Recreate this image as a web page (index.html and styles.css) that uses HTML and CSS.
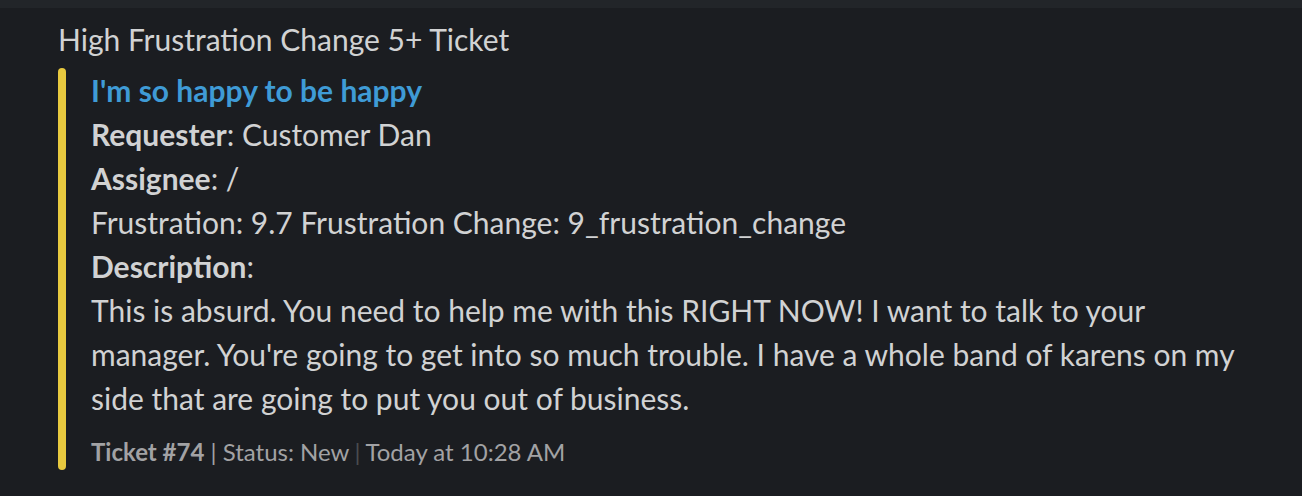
FILE: index.html
```html
<!DOCTYPE html>
<html lang="en">

<head>
    <meta charset="UTF-8">
    <title>High Frustration Change 5+ Ticket</title>
    <meta name="viewport" content="width=device-width, initial-scale=1.0">
    <link rel="stylesheet" href="styles.css">
</head>

<body>
    <div class="top-band"></div>

    <div class="message">
        <div class="message-text">High Frustration Change 5+ Ticket</div>

        <div class="attachment">
            <div class="attachment-bar"></div>
            <div class="attachment-body">
                <a class="attachment-title" href="#">I'm so happy to be happy</a>
                <div class="field"><b>Requester</b>: Customer Dan</div>
                <div class="field"><b>Assignee</b>: /</div>
                <div class="field">Frustration: 9.7 Frustration Change: 9_frustration_change</div>
                <div class="field"><b>Description</b>:</div>
                <div class="field">This is absurd. You need to help me with this RIGHT NOW! I want to talk to your manager. You're going to get into so much trouble. I have a whole band of karens on my side that are going to put you out of business.</div>
                <div class="attachment-footer">
                    <b>Ticket #74</b> | Status: New<span class="sep">|</span>Today at 10:28 AM
                </div>
            </div>
        </div>
    </div>
</body>
</html>
```

FILE: styles.css
```css
/* Fondo oscuro de toda la ventana */
body, html {
height: 100%;
margin: 0;
padding: 0;
background-color: #1b1d21;
font-family: Lato, "Noto Sans", sans-serif;
color: #d1d2d3;
}

/* Franja superior */
.top-band {
height: 8px;
background-color: #222529;
}

.message {
padding: 9px 0 0 58px;
}

.message-text {
font-size: 30px;
line-height: 44px;
}

/* Adjunto con barra de color a la izquierda */
.attachment {
display: flex;
margin-top: 7px;
}

.attachment-bar {
flex: 0 0 8px;
background-color: #e8c93f;
border-radius: 4px;
}

.attachment-body {
padding: 0 0 2px 25px;
width: 1150px;
}

.attachment-title {
display: block;
font-size: 30px;
line-height: 44px;
font-weight: bold;
color: #3f9bd6;
text-decoration: none;
}

.field {
font-size: 30px;
line-height: 44px;
}

.field b {
font-weight: bold;
}

/* Pie del adjunto */
.attachment-footer {
margin-top: 16px;
font-size: 24px;
line-height: 32px;
color: #a2a2a4;
}

.attachment-footer .sep {
color: #4a4c50;
margin: 0 5px;
}
```
